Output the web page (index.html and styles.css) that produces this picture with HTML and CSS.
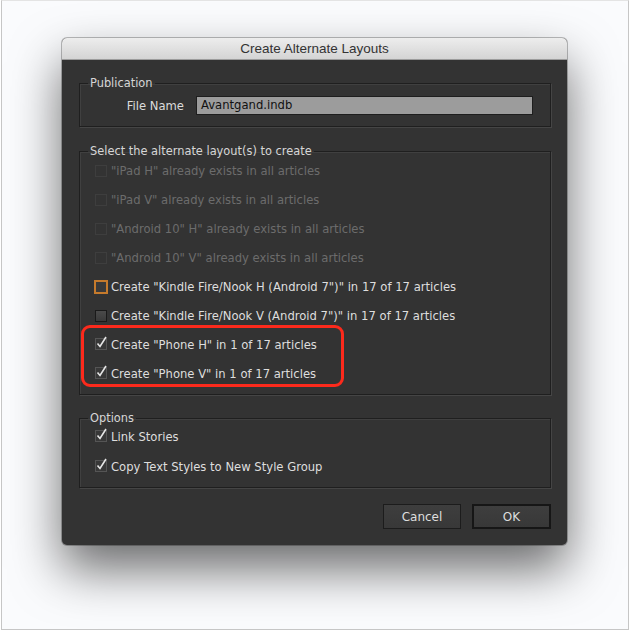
FILE: index.html
```html
<!DOCTYPE html>
<html>
<head>
<meta charset="utf-8">
<link rel="stylesheet" href="styles.css">
</head>
<body>
<div class="frame">
  <div class="dialog">
    <div class="titlebar">Create Alternate Layouts</div>
    <div class="dbody">
      <fieldset class="group pub">
        <legend>Publication</legend>
        <div class="pubrow">
          <label class="flabel">File Name</label>
          <div class="input">Avantgand.indb</div>
        </div>
      </fieldset>

      <fieldset class="group sel">
        <legend>Select the alternate layout(s) to create</legend>
        <div class="rows">
          <div class="row disabled"><span class="cb"></span><span>"iPad H" already exists in all articles</span></div>
          <div class="row disabled"><span class="cb"></span><span>"iPad V" already exists in all articles</span></div>
          <div class="row disabled"><span class="cb"></span><span>"Android 10" H" already exists in all articles</span></div>
          <div class="row disabled"><span class="cb"></span><span>"Android 10" V" already exists in all articles</span></div>
          <div class="row"><span class="cb on focus"></span><span>Create "Kindle Fire/Nook H (Android 7")" in 17 of 17 articles</span></div>
          <div class="row"><span class="cb on"></span><span>Create "Kindle Fire/Nook V (Android 7")" in 17 of 17 articles</span></div>
          <div class="row"><svg class="ck" width="14" height="14" viewBox="0 0 14 14"><rect x="0.5" y="2.5" width="11" height="11" fill="#383838" stroke="#555"/><polyline points="2.5,7.5 5,10.5 11,1" fill="none" stroke="#e6e6e6" stroke-width="1.6"/></svg><span>Create "Phone H" in 1 of 17 articles</span></div>
          <div class="row"><svg class="ck" width="14" height="14" viewBox="0 0 14 14"><rect x="0.5" y="2.5" width="11" height="11" fill="#383838" stroke="#555"/><polyline points="2.5,7.5 5,10.5 11,1" fill="none" stroke="#e6e6e6" stroke-width="1.6"/></svg><span>Create "Phone V" in 1 of 17 articles</span></div>
        </div>
        <div class="highlight"></div>
      </fieldset>

      <fieldset class="group opt">
        <legend>Options</legend>
        <div class="rows optrows">
          <div class="row"><svg class="ck" width="14" height="14" viewBox="0 0 14 14"><rect x="0.5" y="2.5" width="11" height="11" fill="#383838" stroke="#555"/><polyline points="2.5,7.5 5,10.5 11,1" fill="none" stroke="#e6e6e6" stroke-width="1.6"/></svg><span>Link Stories</span></div>
          <div class="row"><svg class="ck" width="14" height="14" viewBox="0 0 14 14"><rect x="0.5" y="2.5" width="11" height="11" fill="#383838" stroke="#555"/><polyline points="2.5,7.5 5,10.5 11,1" fill="none" stroke="#e6e6e6" stroke-width="1.6"/></svg><span>Copy Text Styles to New Style Group</span></div>
        </div>
      </fieldset>

      <div class="buttons">
        <div class="btn cancel">Cancel</div>
        <div class="btn ok">OK</div>
      </div>
    </div>
  </div>
</div>
</body>
</html>
```

FILE: styles.css
```css
html, body {
  margin: 0;
  padding: 0;
  background: #ffffff;
}
.frame {
  box-sizing: border-box;
  width: 628px;
  height: 630px;
  margin-left: 1px;
  border: 1px solid #c6c6c6;
  border-top-color: #e4e4e4;
  background: #fafbfd;
  padding-top: 37px;
  padding-left: 60px;
  font-family: "DejaVu Sans", sans-serif;
}
.dialog {
  width: 505px;
  height: 507px;
  border-radius: 5px;
  background: #333333;
  box-shadow: 0 24px 50px rgba(0,0,0,0.58), 0 0 0 1px rgba(0,0,0,0.25);
  overflow: hidden;
  display: flex;
  flex-direction: column;
}
.titlebar {
  height: 21px;
  line-height: 21px;
  border-bottom: 1px solid #9c9c9c;
  background: linear-gradient(#ededed, #d4d4d4);
  text-align: center;
  font-family: "Liberation Sans", sans-serif;
  font-size: 13.5px;
  color: #333;
}
.dbody {
  padding: 0 16px 0 17px;
  display: flex;
  flex-direction: column;
  position: relative;
}
.group {
  margin: 0;
  padding: 0;
  border: 1px solid #1f1f1f;
  box-shadow: 1px 1px 0 #454545, inset 1px 1px 0 #404040;
  min-width: 0;
  position: relative;
}
.group legend {
  margin-left: 8px;
  padding: 0 2px;
  font-size: 11.4px;
  line-height: 14px;
  color: #d6d6d6;
}
.pub { margin-top: 16px; padding-bottom: 11px; }
.sel { margin-top: 17px; padding-bottom: 12px; }
.opt { margin-top: 16px; padding-bottom: 12px; }
.pubrow {
  display: flex;
  align-items: center;
  padding-top: 6px;
}
.flabel {
  width: 104px;
  text-align: right;
  margin-right: 12px;
  font-size: 11.6px;
  color: #dcdcdc;
}
.input {
  box-sizing: border-box;
  width: 337px;
  height: 19px;
  background: #9c9c9c;
  border: 1px solid #1e1e1e;
  font-size: 11.6px;
  line-height: 17px;
  padding-left: 4px;
  color: #111;
}
.rows {
  display: flex;
  flex-direction: column;
  gap: 12px;
  padding: 4px 0 0 15px;
}
.optrows { padding-top: 3px; gap: 13px; }
.row {
  display: flex;
  align-items: center;
  height: 17px;
  font-size: 11.6px;
  color: #dedede;
  white-space: nowrap;
}
.row.disabled { color: #6c6c6c; }
.cb {
  box-sizing: border-box;
  width: 12px;
  height: 12px;
  margin-right: 4px;
  border: 1px solid #3e3e3e;
  background: transparent;
  flex: none;
}
.cb.on {
  border-color: #1a1a1a;
  background: linear-gradient(#4a4a4a, #3a3a3a);
}
.cb.on.focus {
  width: 14px;
  height: 14px;
  margin-left: -1px;
  margin-right: 3px;
  border: 2px solid #c57a2c;
  background: #3a3a3a;
}
.ck {
  flex: none;
  margin-right: 2px;
  margin-top: -3px;
}
.highlight {
  position: absolute;
  left: 1px;
  top: 167px;
  width: 257px;
  height: 56px;
  border: 3px solid #fc2a1c;
  border-radius: 9px;
}
.buttons {
  display: flex;
  justify-content: flex-end;
  gap: 11px;
  margin-top: 16px;
}
.btn {
  box-sizing: border-box;
  height: 25px;
  display: flex;
  align-items: center;
  justify-content: center;
  font-size: 12px;
  color: #dedede;
  background: linear-gradient(#3e3e3e, #383838);
}
.cancel {
  width: 78px;
  border: 1px solid #1c1c1c;
}
.ok {
  width: 79px;
  border: 2px solid #161616;
}
```
